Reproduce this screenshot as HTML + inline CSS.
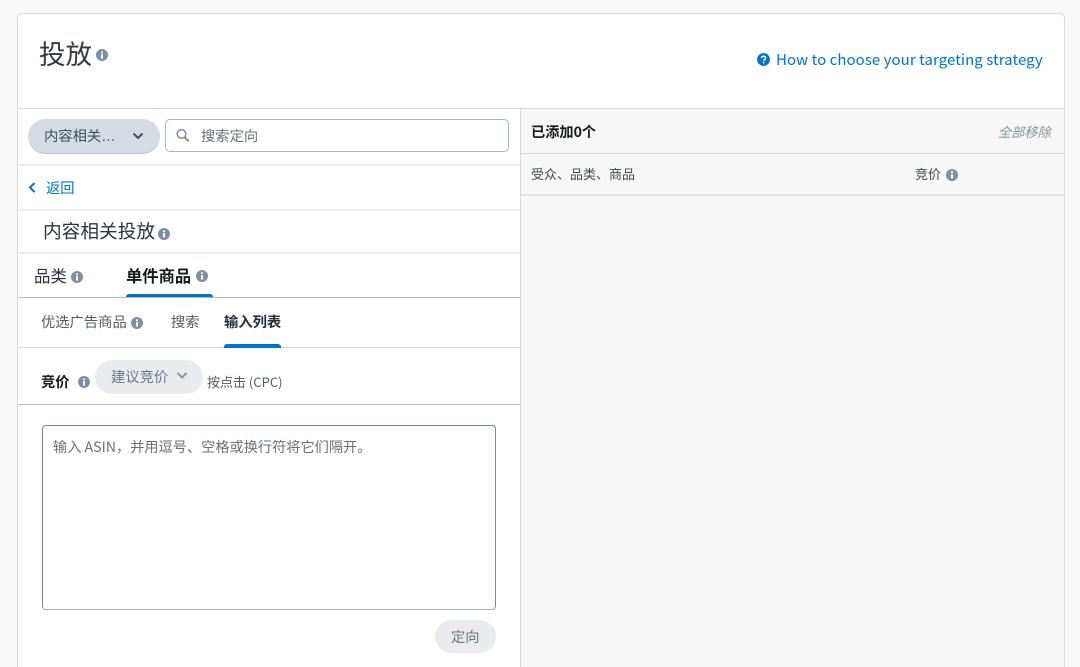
<!DOCTYPE html>
<html lang="zh"><head><meta charset="utf-8"><style>
html,body{margin:0;padding:0;width:1080px;height:667px;overflow:hidden;background:#f8f8f8}
*{box-sizing:border-box}
body{font-family:"Liberation Sans","Noto Sans CJK SC",sans-serif;position:relative}
.a{position:absolute}
.t{position:absolute;white-space:nowrap;font-family:"Noto Sans CJK SC",sans-serif;line-height:20px;color:#16191f}
.l{position:absolute;background:#d5d9d9}
svg{position:absolute;display:block}
</style></head><body>
<div class="a" style="left:17px;top:13px;width:1048px;height:670px;background:#fff;border:1px solid #d5d9d9;border-radius:5px"></div>
<div class="a" style="left:520px;top:109px;width:544px;height:558px;background:#f7f7f7"></div>
<div class="l" style="left:18px;top:108px;width:1046px;height:1px"></div>
<div class="l" style="left:519.500px;top:109px;width:1px;height:558px"></div>
<div class="l" style="left:18px;top:164px;width:502px;height:2px;background:#eceeee"></div>
<div class="l" style="left:18px;top:209px;width:502px;height:2px;background:#eceeee"></div>
<div class="l" style="left:18px;top:252px;width:502px;height:2px;background:#eceeee"></div>
<div class="l" style="left:18px;top:297px;width:502px;height:1px;background:#b4b9bd"></div>
<div class="l" style="left:18px;top:347px;width:502px;height:1px"></div>
<div class="l" style="left:18px;top:404px;width:502px;height:1px;background:#b4b9bd"></div>
<div class="l" style="left:521px;top:153px;width:543px;height:1px"></div>
<div class="l" style="left:521px;top:194px;width:543px;height:2px;background:#e3e5e5"></div>

<div class="t" style="left:39px;top:37px;font-size:26.500px;line-height:32px;color:#333a46">投放</div>
<svg style="left:96px;top:49px" width="12" height="12" viewBox="0 0 12 12"><circle cx="6" cy="6" r="6" fill="#8090a4"/><rect x="5" y="5" width="2" height="4.500" fill="#fff"/><rect x="5" y="2.400" width="2" height="1.700" fill="#fff"/></svg>

<svg style="left:757px;top:53px" width="13" height="13" viewBox="0 0 13 13"><circle cx="6.500" cy="6.500" r="6.400" fill="#0073c7"/><path d="M4.400 5.100C4.500 3.900 5.400 3.200 6.500 3.200c1.200 0 2.100.7 2.100 1.800 0 1.500-1.900 1.500-1.900 2.900" fill="none" stroke="#fff" stroke-width="1.500"/><rect x="5.800" y="8.800" width="1.700" height="1.600" fill="#fff"/></svg>
<div class="t" style="left:776px;top:50px;font-size:15px;color:#0073c7;letter-spacing:.06px">How to choose your targeting strategy</div>

<div class="a" style="left:28px;top:119px;width:132px;height:35px;border-radius:18px;background:#d5dbe3;border-bottom:1px solid #bcc4cc"></div>
<div class="t" style="left:44px;top:126px;font-size:14.300px;color:#414d5c">内容相关<span style="font-family:'Liberation Sans'">…</span></div>
<svg style="left:131px;top:131px" width="14" height="10" viewBox="0 0 14 10"><path d="M2.500 2.500 7 7l4.500-4.500" fill="none" stroke="#414d5c" stroke-width="2"/></svg>

<div class="a" style="left:164.500px;top:119px;width:344.500px;height:33px;background:#fff;border:1px solid #aab7b8;border-radius:5px"></div>
<svg style="left:175px;top:128px" width="16" height="16" viewBox="0 0 16 16"><circle cx="6.500" cy="6" r="4.300" fill="none" stroke="#7d8998" stroke-width="1.500"/><path d="m9.800 9.400 4 4" stroke="#7d8998" stroke-width="2"/></svg>
<div class="t" style="left:201px;top:126px;font-size:14.300px;color:#687078">搜索定向</div>

<svg style="left:27px;top:181px" width="10" height="13" viewBox="0 0 10 13"><path d="M7.500 2 3 6.500l4.500 4.500" fill="none" stroke="#0073c7" stroke-width="2"/></svg>
<div class="t" style="left:46px;top:178px;font-size:14.300px;color:#0073c7">返回</div>

<div class="t" style="left:43px;top:219px;font-size:18.700px;line-height:24px;color:#2b3340">内容相关投放</div>
<svg style="left:158px;top:228px" width="12" height="12" viewBox="0 0 12 12"><circle cx="6" cy="6" r="6" fill="#8090a4"/><rect x="5" y="5" width="2" height="4.500" fill="#fff"/><rect x="5" y="2.400" width="2" height="1.700" fill="#fff"/></svg>

<div class="t" style="left:34px;top:264.500px;font-size:16.400px;color:#232f3e">品类</div>
<svg style="left:71px;top:271px" width="12" height="12" viewBox="0 0 12 12"><circle cx="6" cy="6" r="6" fill="#8090a4"/><rect x="5" y="5" width="2" height="4.500" fill="#fff"/><rect x="5" y="2.400" width="2" height="1.700" fill="#fff"/></svg>
<div class="t" style="left:126px;top:264.500px;font-size:16.300px;font-weight:700;color:#16191f">单件商品</div>
<svg style="left:196px;top:270px" width="12" height="12" viewBox="0 0 12 12"><circle cx="6" cy="6" r="6" fill="#8090a4"/><rect x="5" y="5" width="2" height="4.500" fill="#fff"/><rect x="5" y="2.400" width="2" height="1.700" fill="#fff"/></svg>
<div class="a" style="left:126px;top:294px;width:87px;height:3px;background:#0073c7;border-radius:3px 3px 0 0"></div>

<div class="t" style="left:41px;top:312px;font-size:14.300px;color:#545b64">优选广告商品</div>
<svg style="left:131px;top:317px" width="12" height="12" viewBox="0 0 12 12"><circle cx="6" cy="6" r="6" fill="#8090a4"/><rect x="5" y="5" width="2" height="4.500" fill="#fff"/><rect x="5" y="2.400" width="2" height="1.700" fill="#fff"/></svg>
<div class="t" style="left:171px;top:312px;font-size:14.300px;color:#545b64">搜索</div>
<div class="t" style="left:224px;top:312px;font-size:14.300px;font-weight:700;color:#232f3e">输入列表</div>
<div class="a" style="left:224px;top:344px;width:57px;height:3.500px;background:#0073c7;border-radius:3px 3px 0 0"></div>

<div class="t" style="left:41px;top:372px;font-size:14.300px;font-weight:700;color:#16191f">竞价</div>
<svg style="left:78px;top:376px" width="12" height="12" viewBox="0 0 12 12"><circle cx="6" cy="6" r="6" fill="#8090a4"/><rect x="5" y="5" width="2" height="4.500" fill="#fff"/><rect x="5" y="2.400" width="2" height="1.700" fill="#fff"/></svg>
<div class="a" style="left:95px;top:360px;width:108px;height:34px;background:#e9ebef;border-radius:17px"></div>
<div class="t" style="left:111px;top:367px;font-size:14.300px;color:#6b7684">建议竞价</div>
<svg style="left:175px;top:371px" width="14" height="10" viewBox="0 0 14 10"><path d="M2.500 2 7 6.500 11.500 2" fill="none" stroke="#879596" stroke-width="2"/></svg>
<div class="t" style="left:207px;top:372px;font-size:13px;color:#545b64">按点击 (CPC)</div>

<div class="a" style="left:42px;top:425px;width:454px;height:184.500px;background:#fff;border:1px solid #7d8998;border-bottom-color:#a6afb8;border-radius:4px"></div>
<div class="t" style="left:53px;top:436.500px;font-size:14.200px;color:#687078">输入 ASIN，并用逗号、空格或换行符将它们隔开。</div>

<div class="a" style="left:435px;top:620px;width:61px;height:33px;background:#e9ebef;border-radius:17px"></div>
<div class="t" style="left:451px;top:627px;font-size:14.300px;color:#6b7684">定向</div>

<div class="t" style="left:531px;top:121.500px;font-size:14.200px;font-weight:700;color:#16191f">已添加0个</div>
<div class="t" style="left:998px;top:122px;font-size:13.200px;font-style:italic;color:#879596">全部移除</div>
<div class="t" style="left:531px;top:164px;font-size:13px;color:#414750">受众、品类、商品</div>
<div class="t" style="left:915px;top:164px;font-size:13px;color:#414750">竞价</div>
<svg style="left:946px;top:169px" width="12" height="12" viewBox="0 0 12 12"><circle cx="6" cy="6" r="6" fill="#8090a4"/><rect x="5" y="5" width="2" height="4.500" fill="#fff"/><rect x="5" y="2.400" width="2" height="1.700" fill="#fff"/></svg>
</body></html>
